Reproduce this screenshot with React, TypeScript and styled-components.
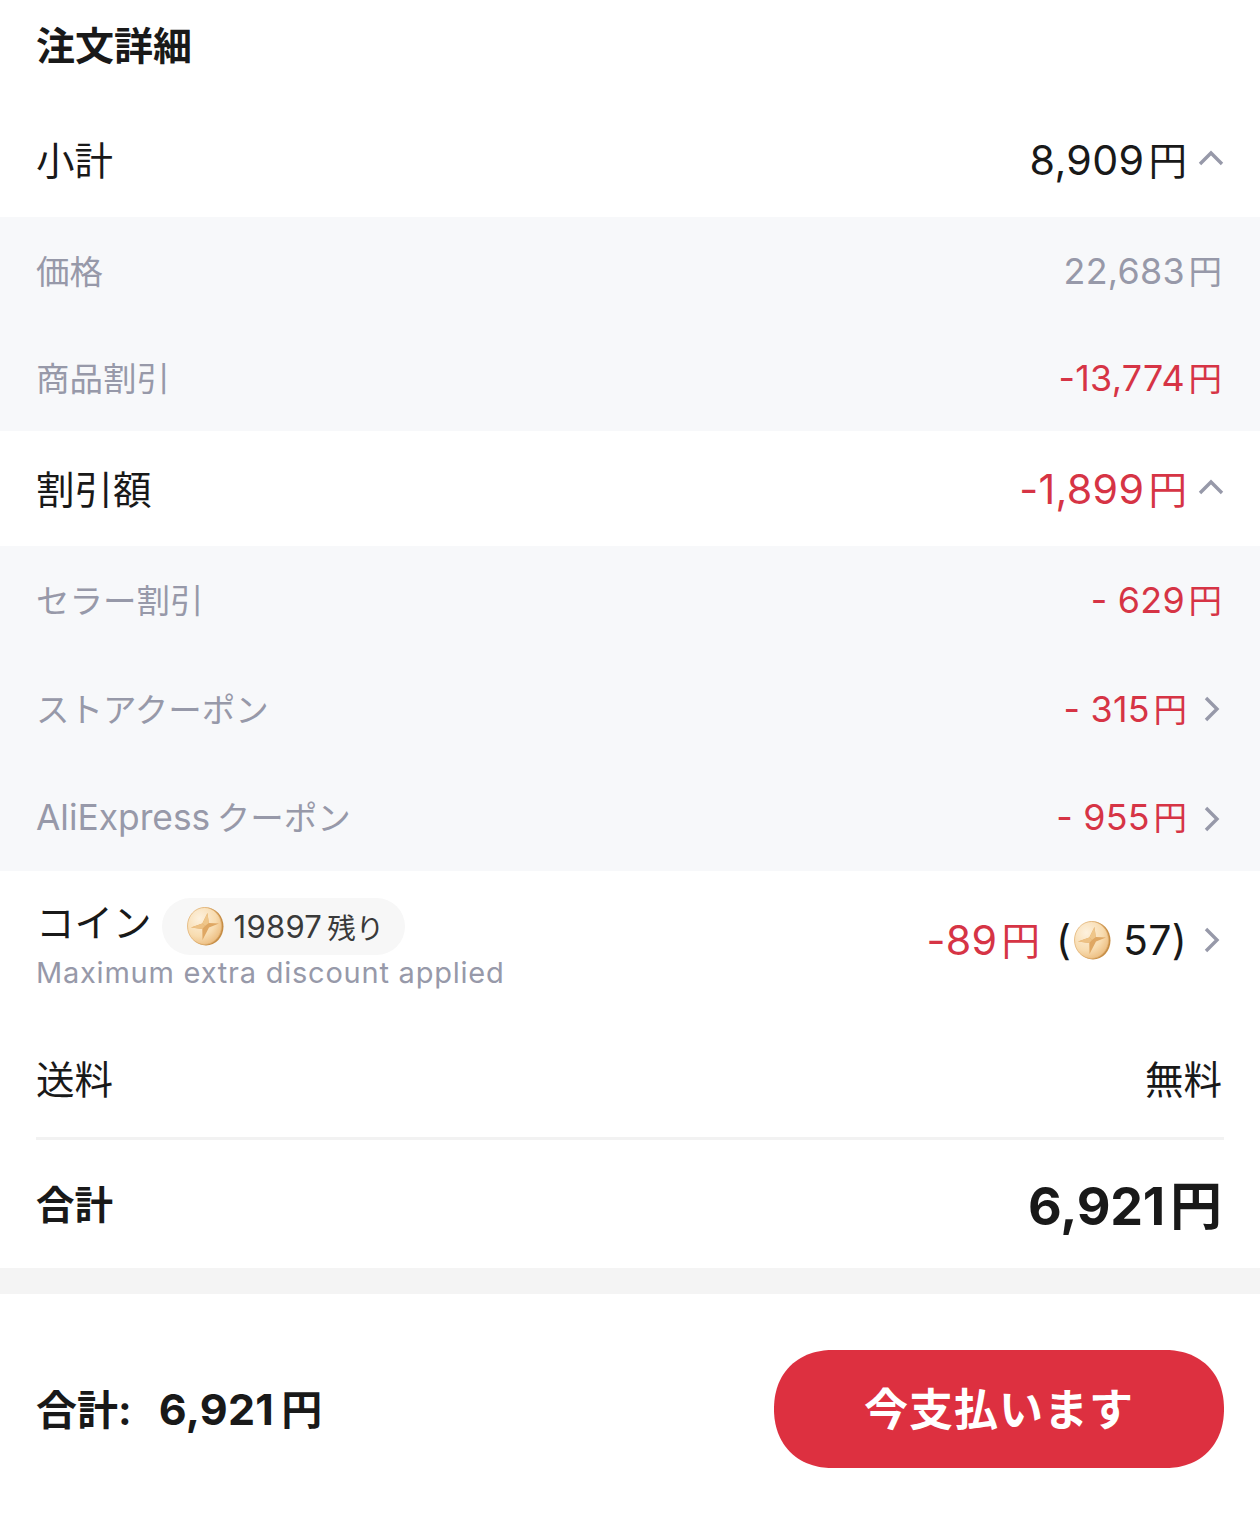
import React from "react";
import styled, { createGlobalStyle } from "styled-components";

const Global = createGlobalStyle`
  html, body { margin: 0; padding: 0; background: #fff; }
  body { font-family: Inter, "Noto Sans CJK JP", sans-serif; }
`;

const Page = styled.div`
  width: 1260px;
  height: 1523px;
  display: flex;
  flex-direction: column;
  color: #191919;
  overflow: hidden;
`;

const Title = styled.h2`
  margin: 0 0 19px;
  height: 86px;
  padding: 0 36px;
  display: flex;
  align-items: center;
  font-size: 39px;
  font-weight: 700;
`;

const Row = styled.div<{ $h: number; $pb?: number }>`
  height: ${(p) => p.$h}px;
  box-sizing: border-box;
  padding: 0 36px ${(p) => p.$pb ?? 0}px 36px;
  display: flex;
  align-items: center;
  justify-content: space-between;
  font-size: 38.5px;
`;

const Sub = styled.div`
  background: #f7f8fa;
  display: flex;
  flex-direction: column;
`;

const SubRow = styled.div<{ $h: number; $pb?: number }>`
  height: ${(p) => p.$h}px;
  box-sizing: border-box;
  padding: 0 36px ${(p) => p.$pb ?? 0}px 36px;
  display: flex;
  align-items: center;
  justify-content: space-between;
  font-size: 33.5px;
  color: #9799a9;
`;

const Num = styled.span`
  font-size: 1.07em;
  letter-spacing: 0.008em;
  margin-right: 0.1em;
`;

const LatinLabel = styled.span`
  font-size: 1.055em;
  margin-right: -3px;
`;

const Value = styled.span<{ $red?: boolean }>`
  white-space: pre;
  margin-right: 2px;
  color: ${(p) => (p.$red ? "#d63445" : "inherit")};
`;

const LiftedValue = styled(Value)`
  padding-bottom: 4px;
`;

const Right = styled.span`
  display: inline-flex;
  align-items: center;
`;

const Chevron = styled.svg<{ $drop?: number }>`
  width: 26px;
  height: 26px;
  margin: ${(p) => p.$drop ?? 0}px 0 0 9px;
  fill: none;
  stroke: #9799a9;
  stroke-width: 3.4;
`;

const CoinLeft = styled.div`
  display: flex;
  flex-direction: column;
`;

const CoinTop = styled.div`
  display: flex;
  align-items: center;
  gap: 10px;
`;

const CoinLabel = styled.span`
  padding-bottom: 12px;
`;

const Pill = styled.span`
  display: inline-flex;
  align-items: center;
  height: 57px;
  padding: 0 21px 0 24px;
  border-radius: 29px;
  background: #f7f7f7;
  font-size: 28.5px;
  color: #3a3a3a;
  white-space: pre;
`;

const PillNum = styled.span`
  font-size: 31px;
  letter-spacing: 0.3px;
  margin-right: 5px;
`;

const Hint = styled.div`
  font-size: 29px;
  letter-spacing: 0.77px;
  color: #9799a9;
  margin-top: -5px;
`;

const CoinSvg = styled.svg<{ $gap: number }>`
  width: 38px;
  height: 40px;
  margin: 0 ${(p) => p.$gap}px 0 0;
  flex: none;
`;

const CoinRowRight = styled(Right)`
  font-size: 38.5px;
  padding-bottom: 2px;
`;

const CoinCount = styled.span`
  font-size: 41px;
  letter-spacing: 0.3px;
  margin-right: 2px;
`;

const Paren = styled.span`
  margin-left: 14px;
  margin-right: 2px;
  font-size: 41px;
`;

const Divider = styled.div`
  height: 3px;
  margin: 0 36px;
  background: #f2f2f2;
`;

const TotalLabel = styled.span`
  font-weight: 700;
`;

const TotalValue = styled.span`
  font-size: 52px;
  font-weight: 700;
  white-space: pre;
  margin-right: 2px;
`;

const TotalNum = styled.span`
  letter-spacing: -0.2px;
  margin-right: 5px;
`;

const Band = styled.div`
  height: 26px;
  background: #f4f4f4;
`;

const Footer = styled.div`
  flex: 1;
  padding: 0 36px 0 36px;
  display: flex;
  align-items: center;
  justify-content: space-between;
`;

const FooterTotal = styled.span`
  font-size: 41px;
  font-weight: 700;
  white-space: pre;
  padding-bottom: 4px;
`;

const FooterNum = styled.span`
  font-size: 43px;
  margin-left: 27px;
  margin-right: 7px;
  letter-spacing: 0.3px;
`;

const PayButton = styled.button`
  width: 450px;
  height: 118px;
  border: 0;
  border-radius: 59px;
  corner-shape: superellipse(1.12);
  background: #dd3040;
  color: #fff;
  font-family: inherit;
  font-size: 44px;
  font-weight: 600;
  letter-spacing: 1px;
  padding: 0 0 4px;
`;

const Up = () => (
  <Chevron viewBox="0 0 26 26"><path d="M2 19 L13 8 L24 19" /></Chevron>
);
const Next = ({ drop }: { drop?: number }) => (
  <Chevron $drop={drop} viewBox="0 0 26 26"><path d="M8 2 L19 13 L8 24" /></Chevron>
);

let uid = 0;
const Coin = ({ gap = 0 }: { gap?: number }) => {
  const id = `coin${uid++}`;
  return (
    <CoinSvg $gap={gap} viewBox="0 0 38 40">
      <defs>
        <radialGradient id={id} cx="35%" cy="30%" r="80%">
          <stop offset="0%" stopColor="#fdf1de" />
          <stop offset="60%" stopColor="#f8dcb0" />
          <stop offset="100%" stopColor="#eab878" />
        </radialGradient>
      </defs>
      <ellipse cx="20" cy="20.5" rx="17.5" ry="19" fill="#c68d45" />
      <ellipse cx="18.5" cy="20" rx="17" ry="18.5" fill={`url(#${id})`} stroke="#e2b273" strokeWidth="0.8" />
      <path d="M21.5 7 L22.8 17 L33 17.5 L23 21.5 L16.5 34 L16.3 23 L5 21.5 L16.3 17.5 Z" fill="#dfa763" />
      <path d="M21.5 7 L22.8 17 L19 20 L16.3 17.5 Z" fill="#efc68a" />
      <path d="M5 21.5 L16.3 17.5 L19 20 L16.3 23 Z" fill="#edc184" />
    </CoinSvg>
  );
};

export default function App() {
  return (
    <>
      <Global />
      <Page>
        <Title>注文詳細</Title>
        <Row $h={112} $pb={6}>
          <span>小計</span>
          <Right><Value><Num>8,909</Num>円</Value><Up /></Right>
        </Row>
        <Sub>
          <SubRow $h={107} $pb={2}><span>価格</span><Value><Num>22,683</Num>円</Value></SubRow>
          <SubRow $h={107} $pb={2}><span>商品割引</span><Value $red><Num>-13,774</Num>円</Value></SubRow>
        </Sub>
        <Row $h={115} $pb={3}>
          <span>割引額</span>
          <Right><Value $red><Num>-1,899</Num>円</Value><Up /></Right>
        </Row>
        <Sub>
          <SubRow $h={109} $pb={4}><span>セラー割引</span><Value $red><Num>- 629</Num>円</Value></SubRow>
          <SubRow $h={108} $pb={4}>
            <span>ストアクーポン</span>
            <Right><Value $red><Num>- 315</Num>円</Value><Next drop={4} /></Right>
          </SubRow>
          <SubRow $h={108} $pb={3}>
            <span><LatinLabel>AliExpress</LatinLabel> クーポン</span>
            <Right><Value $red><Num>- 955</Num>円</Value><Next drop={6} /></Right>
          </SubRow>
        </Sub>
        <Row $h={150} $pb={10}>
          <CoinLeft>
            <CoinTop>
              <CoinLabel>コイン</CoinLabel>
              <Pill><Coin gap={10} /><PillNum>19897</PillNum>残り</Pill>
            </CoinTop>
            <Hint>Maximum extra discount applied</Hint>
          </CoinLeft>
          <CoinRowRight>
            <LiftedValue $red><Num>-89</Num>円</LiftedValue>
            <Paren>(</Paren>
            <Coin gap={12} />
            <CoinCount>57)</CoinCount>
            <Next />
          </CoinRowRight>
        </Row>
        <Row $h={116} $pb={4}>
          <span>送料</span>
          <Value>無料</Value>
        </Row>
        <Divider />
        <Row $h={128} $pb={4}>
          <TotalLabel>合計</TotalLabel>
          <TotalValue><TotalNum>6,921</TotalNum>円</TotalValue>
        </Row>
        <Band />
        <Footer>
          <FooterTotal>合計:<FooterNum>6,921</FooterNum>円</FooterTotal>
          <PayButton>今支払います</PayButton>
        </Footer>
      </Page>
    </>
  );
}
